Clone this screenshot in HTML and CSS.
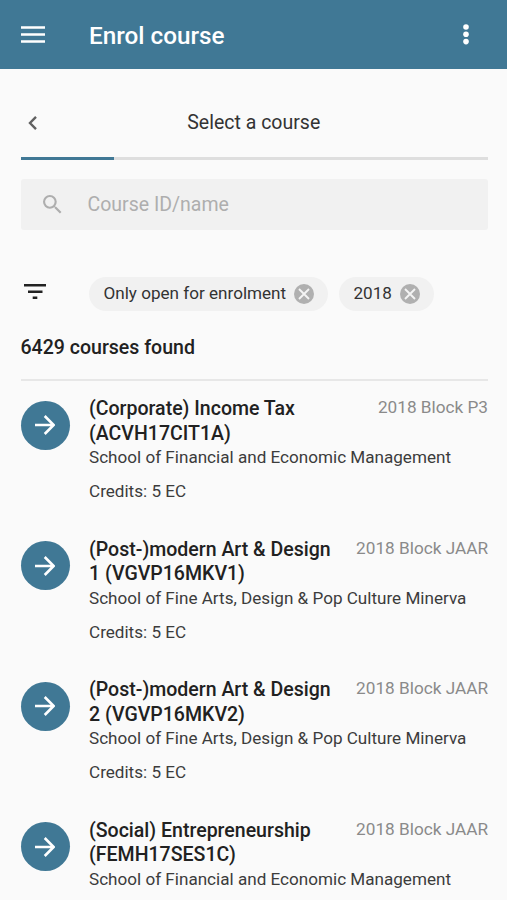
FILE: index.html
```html
<!DOCTYPE html>
<html lang="en">
<head>
<meta charset="utf-8">
<title>Enrol course</title>
<link rel="stylesheet" href="styles.css">
</head>
<body>
<header class="bar">
  <svg class="menu" viewBox="0 0 24 17"><path d="M0 1.5h24M0 8.5h24M0 15.5h24"/></svg>
  <h1>Enrol course</h1>
  <svg class="more" viewBox="0 0 6 21"><circle cx="3" cy="3" r="2.8"/><circle cx="3" cy="10.3" r="2.8"/><circle cx="3" cy="17.6" r="2.8"/></svg>
</header>
<main>
  <div class="step">
    <svg class="back" viewBox="0 0 9 14"><path d="M8 .9L2 7l6 6.1"/></svg>
    <h2>Select a course</h2>
  </div>
  <div class="progress"><div class="done"></div></div>
  <div class="search">
    <svg class="glass" viewBox="3 3 17.5 17.5"><path d="M15.5 14h-.79l-.28-.27A6.47 6.47 0 0 0 16 9.5 6.5 6.5 0 1 0 9.5 16c1.61 0 3.09-.59 4.23-1.57l.27.28v.79l5 4.99L20.49 19l-4.99-5zm-6 0a4.5 4.5 0 1 1 0-9 4.5 4.5 0 0 1 0 9z"/></svg>
    <span>Course ID/name</span>
  </div>
  <div class="filters">
    <svg class="filter" viewBox="0 0 22 15"><path d="M0 1.3h22M4 7.8h14.5M8.7 13.7h4.6"/></svg>
    <div class="chip chip-open"><span>Only open for enrolment</span><svg class="remove" viewBox="0 0 20 20"><circle cx="10" cy="10" r="10"/><path d="M5 5l10 10M15 5L5 15"/></svg></div>
    <div class="chip chip-year"><span>2018</span><svg class="remove" viewBox="0 0 20 20"><circle cx="10" cy="10" r="10"/><path d="M5 5l10 10M15 5L5 15"/></svg></div>
  </div>
  <h3 class="count">6429 courses found</h3>
  <ul class="list">
    <li class="course">
      <div class="go"><svg viewBox="0 0 20 20"><path d="M0 10h18.5M9.7 1l9 9-9 9"/></svg></div>
      <div class="info">
        <div class="head"><h4>(Corporate) Income Tax (ACVH17CIT1A)</h4><span class="period">2018 Block P3</span></div>
        <p>School of Financial and Economic Management</p>
        <p class="credits">Credits: 5 EC</p>
      </div>
    </li>
    <li class="course">
      <div class="go"><svg viewBox="0 0 20 20"><path d="M0 10h18.5M9.7 1l9 9-9 9"/></svg></div>
      <div class="info">
        <div class="head"><h4>(Post-)modern Art &amp; Design 1 (VGVP16MKV1)</h4><span class="period">2018 Block JAAR</span></div>
        <p>School of Fine Arts, Design &amp; Pop Culture Minerva</p>
        <p class="credits">Credits: 5 EC</p>
      </div>
    </li>
    <li class="course">
      <div class="go"><svg viewBox="0 0 20 20"><path d="M0 10h18.5M9.7 1l9 9-9 9"/></svg></div>
      <div class="info">
        <div class="head"><h4>(Post-)modern Art &amp; Design 2 (VGVP16MKV2)</h4><span class="period">2018 Block JAAR</span></div>
        <p>School of Fine Arts, Design &amp; Pop Culture Minerva</p>
        <p class="credits">Credits: 5 EC</p>
      </div>
    </li>
    <li class="course">
      <div class="go"><svg viewBox="0 0 20 20"><path d="M0 10h18.5M9.7 1l9 9-9 9"/></svg></div>
      <div class="info">
        <div class="head"><h4>(Social) Entrepreneurship (FEMH17SES1C)</h4><span class="period">2018 Block JAAR</span></div>
        <p>School of Financial and Economic Management</p>
      </div>
    </li>
  </ul>
</main>
</body>
</html>
```
FILE: styles.css
```css
* { box-sizing: border-box; margin: 0; padding: 0; }
html, body { height: 900px; overflow: hidden; }
body { background: #fafafa; color: #212121; font-family: Roboto, sans-serif; }
svg { display: block; flex: none; fill: none; }
h1, h2, h3, h4 { font-weight: 500; }
.bar { height: 69px; background: #407895; color: #fff; display: flex; align-items: center; padding: 0 38.5px 0 21px; }
.menu { width: 24px; height: 17px; stroke: #fff; stroke-width: 2.6; }
.bar h1 { flex: 1; margin-left: 44px; font-size: 24.3px; line-height: 32px; padding-top: 2px; }
.more { width: 6px; height: 21px; fill: #fff; }
main { padding: 0 19px 0 20.5px; }
.step { height: 88px; display: flex; align-items: center; padding: 19px 0 0 7px; }
.back { width: 9px; height: 14px; stroke: #616161; stroke-width: 2.4; }
.step h2 { flex: 1; text-align: center; font-weight: 400; font-size: 19.5px; line-height: 24px; color: #333; padding-right: 17px; }
.progress { height: 2.5px; background: #dedede; }
.done { width: 93px; height: 100%; background: #407895; }
.search { margin-top: 19.5px; height: 51px; border-radius: 3px; background: #f1f1f1; display: flex; align-items: center; gap: 26px; padding-left: 22.5px; font-size: 19.5px; color: #aeaeae; }
.glass { width: 18.5px; height: 18.5px; fill: #aeaeae; }
.filters { margin-top: 46.5px; height: 34px; display: flex; align-items: center; }
.filter { width: 22px; height: 15px; margin: -5px 43px 0 3.5px; stroke: #222; stroke-width: 2.5; }
.chip { height: 34px; border-radius: 17px; background: #f1f1f1; display: flex; align-items: center; justify-content: space-between; padding: 0 14px 0 14.5px; font-size: 17.1px; color: #333; }
.chip span { margin-top: -1px; }
.chip-open { width: 239px; margin-right: 11px; }
.chip-year { width: 95px; }
.remove { width: 20px; height: 20px; fill: #b0b0b0; }
.remove path { stroke: #f4f4f4; stroke-width: 1.9; }
.count { margin-top: 25px; font-size: 19.55px; line-height: 24px; }
.list { list-style: none; margin-top: 19.5px; border-top: 2px solid #e7e7e7; }
.course { display: flex; gap: 19.5px; height: 140.5px; padding-top: 16px; }
.go { flex: none; width: 49px; height: 49px; margin-top: 3.5px; border-radius: 50%; background: #407895; display: flex; align-items: center; justify-content: center; }
.go svg { width: 20px; height: 20px; stroke: #fff; stroke-width: 2.6; }
.info { flex: 1; min-width: 0; }
.head { display: flex; justify-content: space-between; gap: 20px; }
.head h4 { font-size: 19.55px; line-height: 24.5px; }
.period { flex: none; font-size: 17.2px; line-height: 21px; color: #8a8a8a; }
.info p { font-size: 17.1px; line-height: 23px; color: #3c3c3c; white-space: nowrap; }
.info .credits { margin-top: 11px; }
```
